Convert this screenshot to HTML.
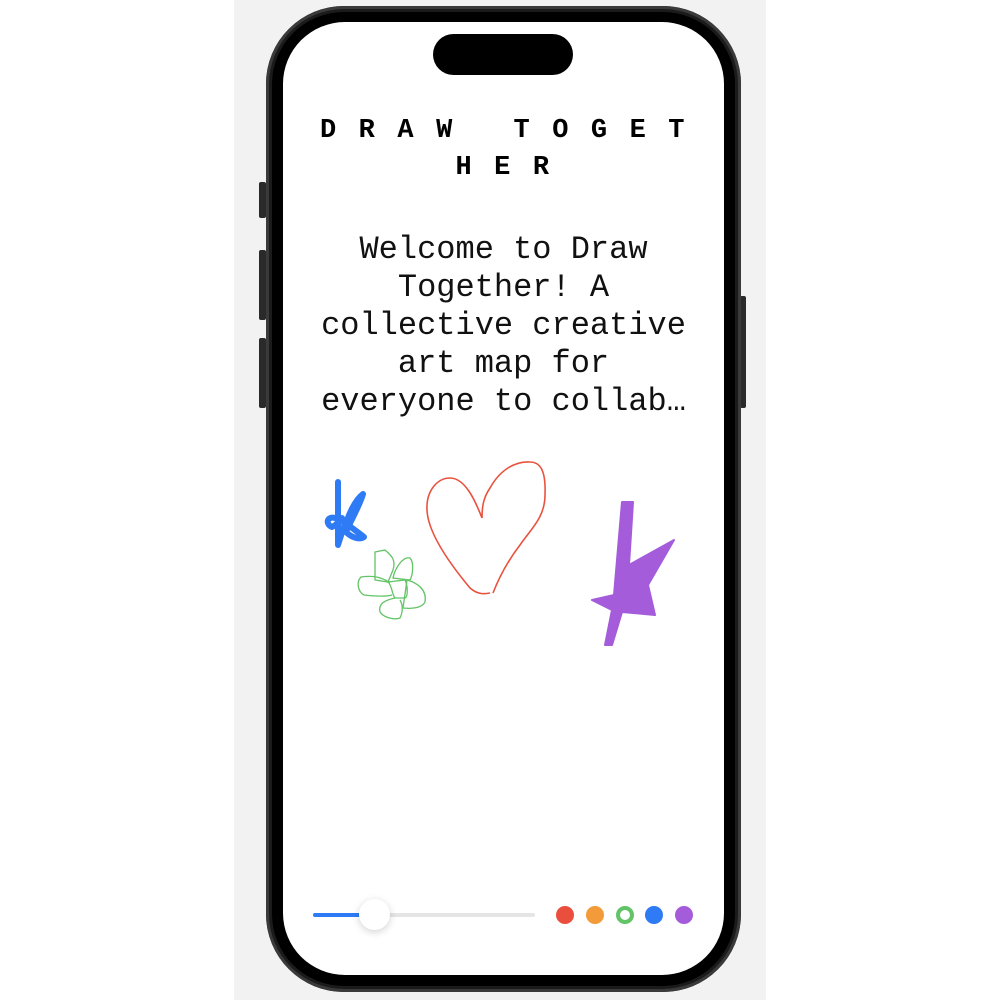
<!DOCTYPE html>
<html><head><style>
html,body{margin:0;padding:0;width:1000px;height:1000px;background:#fff;overflow:hidden}
.bg{position:absolute;left:234px;top:0;width:532px;height:1000px;background:#f2f2f2}
.btn{position:absolute;background:#2a2a2a;border-radius:2px}
.phone{position:absolute;left:266px;top:6px;width:475px;height:986px;border-radius:78px;background:#1b1b1b;box-shadow:inset 0 0 0 3px #3a3a3a}
.inner{position:absolute;left:272px;top:12px;width:463px;height:974px;border-radius:72px;background:#000}
.screen{position:absolute;left:283px;top:22px;width:441px;height:953px;border-radius:62px;background:#fff;overflow:hidden}
.island{position:absolute;left:150px;top:12px;width:140px;height:41px;border-radius:21px;background:#000}
.title{position:absolute;left:15px;top:91px;width:411px;text-align:center;font-family:"Liberation Mono",monospace;font-weight:bold;font-size:27px;letter-spacing:22.5px;line-height:37px;padding-left:20px;box-sizing:border-box;word-break:break-all}
.body{position:absolute;left:-10px;top:209px;width:461px;text-align:center;font-family:"Liberation Mono",monospace;font-size:32px;line-height:38px;color:#111}
.track{position:absolute;top:891px;height:4px;border-radius:2px}
.knob{position:absolute;left:76px;top:877px;width:31px;height:31px;border-radius:50%;background:#fff;box-shadow:0 2px 8px rgba(0,0,0,.18)}
.dot{position:absolute;top:884px;width:18px;height:18px;border-radius:50%}
</style></head><body>
<div class="bg"></div>
<div class="btn" style="left:259px;top:182px;width:7px;height:36px"></div>
<div class="btn" style="left:259px;top:250px;width:7px;height:70px"></div>
<div class="btn" style="left:259px;top:338px;width:7px;height:70px"></div>
<div class="btn" style="left:740px;top:296px;width:6px;height:112px"></div>
<div class="phone"></div>
<div class="inner"></div>
<div class="screen">
<div class="island"></div>
<div class="title">DRAW TOGETHER</div>
<div class="body">Welcome to Draw<br>Together! A<br>collective creative<br>art map for<br>everyone to collab…</div>
<svg style="position:absolute;left:0;top:0" width="441" height="953" viewBox="283 22 441 953">
<path d="M338 482 L338 545 L346 520 M344 530 C348 515 355 500 363 494 C360 505 352 518 346 532 C352 538 360 540 364 537 C355 530 345 522 335 518 C327 516 325 524 332 527 C337 525 340 520 342 518" fill="none" stroke="#2f7bf5" stroke-width="6" stroke-linecap="round" stroke-linejoin="round"/>
<path d="M482 518 C475 500 465 478 450 478 C438 478 426 490 427 510 C428 535 455 570 470 588 C478 595 485 594 490 593 M493 593 C500 575 510 558 520 545 C530 530 545 518 545 495 C546 470 540 462 530 462 C515 461 500 470 490 488 C483 498 482 508 482 518" fill="none" stroke="#e8533f" stroke-width="1.6" stroke-linejoin="round"/>
<g fill="none" stroke="#62c466" stroke-width="1.3">
<path d="M375 580 L375 552 L385 550 C392 556 396 560 393 570 L388 582 Z"/>
<path d="M393 578 C395 568 403 556 410 558 C414 562 413 575 410 580 Z"/>
<path d="M388 582 L405 580 C408 586 408 597 405 598 L395 598 C392 595 392 585 388 582 Z"/>
<path d="M390 583 C380 575 368 576 361 577 C356 582 358 592 364 595 C373 596 385 597 392 595"/>
<path d="M407 580 C418 583 427 590 425 602 C422 608 412 609 403 608 Z"/>
<path d="M395 598 C386 600 378 603 380 612 C384 618 395 620 400 618 C403 612 403 605 400 600"/>
</g>
<path d="M622 502 L633 502 L629 565 L674 540 L648 585 L655 615 L622 612 L612 645 L605 645 L612 610 L592 600 L614 595 Z" fill="#a45cdb" stroke="#a45cdb" stroke-width="2" stroke-linejoin="round"/>
</svg>
<div class="track" style="left:30px;width:50px;background:#2f7bf5"></div>
<div class="track" style="left:80px;width:172px;background:#e5e5e5"></div>
<div class="knob"></div>
<div class="dot" style="left:273px;background:#ea4f3d"></div>
<div class="dot" style="left:303px;background:#f29b38"></div>
<div class="dot" style="left:333px;width:10px;height:10px;border:4px solid #62c466;background:#fff"></div>
<div class="dot" style="left:362px;background:#2f7bf5"></div>
<div class="dot" style="left:392px;background:#a45cdb"></div>
</div>
</body></html>
